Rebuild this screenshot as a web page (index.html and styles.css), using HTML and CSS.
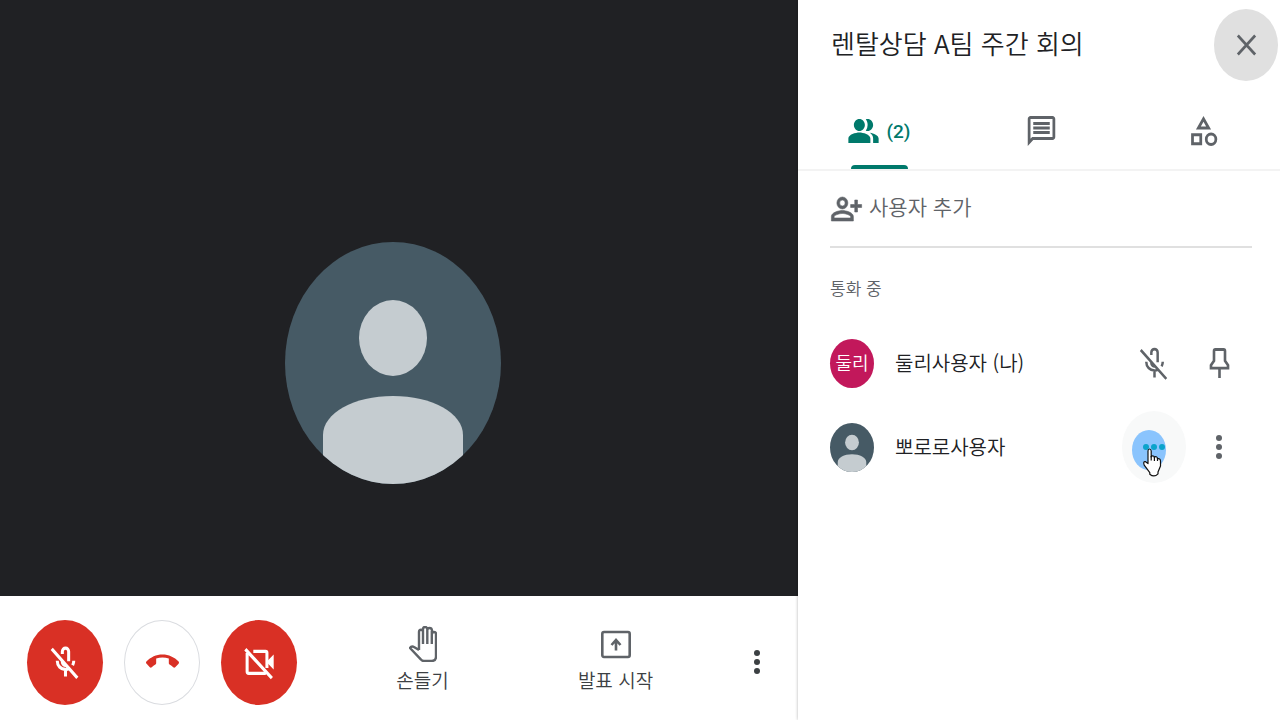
FILE: index.html
```html
<!DOCTYPE html>
<html lang="ko">
<head>
    <meta charset="UTF-8">
    <meta name="viewport" content="width=device-width, initial-scale=1.0">
    <title>렌탈상담 A팀 주간 회의</title>
    <link rel="stylesheet" href="styles.css">
</head>
<body>
    <svg class="symbols" aria-hidden="true">
        <symbol id="person" viewBox="0 0 216 242" preserveAspectRatio="none">
            <clipPath id="person-clip"><ellipse cx="108" cy="121" rx="108" ry="121"/></clipPath>
            <g clip-path="url(#person-clip)">
                <rect width="216" height="242" fill="#465a65"/>
                <ellipse cx="108" cy="96" rx="34" ry="38" fill="#c5ccd0"/>
                <path d="M38 242V193C38 171 69 154 108 154S178 171 178 193V242Z" fill="#c5ccd0"/>
            </g>
        </symbol>
        <symbol id="mic-off" viewBox="0 0 24 24" preserveAspectRatio="none">
            <path d="M2 3.3 20.6 22.6M9.700 6.600V5a2.300 2.300 0 0 1 4.600 0v6.500M9.700 11V12a2.300 2.300 0 0 0 2.900 2.200M6 11.200c0 3.400 2.600 5.800 6 5.800 1 0 2-.3 2.800-.8M12 17v4.600M18 11.200c0 1.100-.3 2.100-.8 3" fill="none" stroke="currentColor"/>
        </symbol>
        <symbol id="dots" viewBox="0 0 6 24" preserveAspectRatio="none">
            <ellipse cx="3" cy="3" rx="3" ry="3"/>
            <ellipse cx="3" cy="12" rx="3" ry="3"/>
            <ellipse cx="3" cy="21" rx="3" ry="3"/>
        </symbol>
    </svg>

    <div class="meeting">
        <main class="call">
            <div class="stage">
                <svg class="stage-avatar"><use href="#person"/></svg>
            </div>
            <div class="toolbar">
                <div class="call-buttons">
                    <button class="round-button red" aria-label="마이크 켜기">
                        <svg class="icon bold"><use href="#mic-off"/></svg>
                    </button>
                    <button class="round-button outline" aria-label="통화에서 나가기">
                        <svg class="icon" viewBox="0 0 24 24" preserveAspectRatio="none"><path d="M12 9c-1.6 0-3.15.25-4.6.72v3.1c0 .39-.23.74-.56.9-.98.49-1.87 1.12-2.66 1.85-.18.18-.43.28-.7.28-.28 0-.53-.11-.71-.29L.29 13.08A.956.956 0 0 1 0 12.37c0-.28.11-.53.29-.71C3.34 8.78 7.46 7 12 7s8.66 1.78 11.71 4.67c.18.18.29.43.29.71 0 .28-.11.53-.29.71l-2.48 2.48c-.18.18-.43.29-.71.29-.27 0-.52-.11-.7-.28a11.27 11.27 0 0 0-2.67-1.85.996.996 0 0 1-.56-.9v-3.1C15.15 9.25 13.6 9 12 9z"/></svg>
                    </button>
                    <button class="round-button red" aria-label="카메라 켜기">
                        <svg class="icon" viewBox="0 0 24 24" preserveAspectRatio="none">
                            <path d="M7.5 4.9h8.9q1 0 1 1V16M3 6v12.4q0 1.2 1.2 1.2h12.4M1.700 3.500 21 22.8" fill="none" stroke="currentColor" stroke-width="2.200"/>
                            <path d="M17 12l5.3-5v10z"/>
                        </svg>
                    </button>
                </div>
                <button class="action">
                    <svg class="hand" viewBox="0 0 28 36"><path d="M10 24V6q0-2.3 2-2.3T14 6V3.3Q14 1 16.1 1t2.2 2.3V4q0-2 2.2-2T23 4.3V8q0-2 2-2t2 2v22.5q0 4.5-4.5 4.5H15q-2 0-3.2-1.6L1 22q1.5-2.4 4.4-.8L10 24M14 5v13M18.3 4v14M22.8 5v13" fill="none" stroke="currentColor" stroke-width="2.400" stroke-linejoin="round"/></svg>
                    <span>손들기</span>
                </button>
                <button class="action">
                    <svg class="present" viewBox="0 0 30 36"><path d="M3 6h24q1.700 0 1.700 2v21q0 2-1.700 2H3q-1.700 0-1.700-2V8q0-2 1.700-2zM15 24.500V15M10.500 19 15 14l4.500 5" fill="none" stroke="currentColor" stroke-width="2.600"/></svg>
                    <span>발표 시작</span>
                </button>
                <button class="toolbar-more" aria-label="옵션 더보기"><svg class="dots"><use href="#dots"/></svg></button>
            </div>
        </main>

        <aside class="panel">
            <header class="panel-header">
                <h1>렌탈상담 A팀 주간 회의</h1>
                <button class="icon-button close" aria-label="닫기">
                    <svg class="icon" viewBox="0 0 24 24" preserveAspectRatio="none"><path d="M5.7 5.7 18.3 18.3M18.3 5.7 5.7 18.3" stroke="currentColor" stroke-width="2"/></svg>
                </button>
            </header>

            <nav class="tabs">
                <button class="tab active" aria-label="사용자">
                    <svg class="icon" viewBox="0 0 24 24" preserveAspectRatio="none"><path d="M15 8c0-1.42-.5-2.73-1.33-3.76.42-.14.86-.24 1.33-.24 2.21 0 4 1.79 4 4s-1.79 4-4 4c-.43 0-.84-.09-1.23-.21-.03-.01-.06-.02-.1-.03A5.98 5.98 0 0 0 15 8zm1.66 5.13C18.03 14.06 19 15.32 19 17v3h4v-3c0-2.18-3.58-3.47-6.34-3.87zM9 4c2.21 0 4 1.79 4 4s-1.79 4-4 4-4-1.79-4-4 1.79-4 4-4zm0 9c2.67 0 8 1.34 8 4v3H1v-3c0-2.66 5.33-4 8-4z"/></svg>
                    <span>(2)</span>
                </button>
                <button class="tab" aria-label="채팅">
                    <svg class="icon" viewBox="0 0 24 24" preserveAspectRatio="none"><path d="M4 4h16v12H5.17L4 17.17V4m0-2c-1.1 0-1.99.9-1.99 2L2 22l4-4h14c1.1 0 2-.9 2-2V4c0-1.1-.9-2-2-2H4zm2 10h12v2H6v-2zm0-3h12v2H6V9zm0-3h12v2H6V6z"/></svg>
                </button>
                <button class="tab" aria-label="활동">
                    <svg class="icon" viewBox="0 0 24 24" preserveAspectRatio="none"><path fill-rule="evenodd" d="M12 2l-5.5 9h11L12 2zm0 3.84L13.93 9h-3.87L12 5.84zM17.5 13a4.5 4.5 0 1 0 0 9 4.5 4.5 0 0 0 0-9zm0 7a2.5 2.5 0 0 1 0-5 2.5 2.5 0 0 1 0 5zM3 21.5h8v-8H3v8zm2-6h4v4H5v-4z"/></svg>
                </button>
            </nav>

            <div class="people">
                <button class="add-person">
                    <svg class="icon" viewBox="0 0 24 24" preserveAspectRatio="none"><path fill-rule="evenodd" d="M18 6h2v3h3v2h-3v3h-2v-3h-3V9h3zM9 4a4 4 0 1 0 0 8 4 4 0 0 0 0-8zm0 2a2 2 0 1 1 0 4 2 2 0 0 1 0-4zM9 13c-2.67 0-8 1.34-8 4v3h16v-3c0-2.66-5.33-4-8-4zm6 5H3v-.99C3.2 16.29 6.3 15 9 15s5.8 1.29 6 2v1z" stroke="currentColor" stroke-width=".4"/></svg>
                    <span>사용자 추가</span>
                </button>
                <h2>통화 중</h2>
                <ul>
                    <li>
                        <span class="avatar initials">둘리</span>
                        <span class="name">둘리사용자 (나)</span>
                        <button class="icon-button" aria-label="음소거됨">
                            <svg class="icon thin"><use href="#mic-off"/></svg>
                        </button>
                        <button class="icon-button" aria-label="화면에 고정">
                            <svg class="icon" viewBox="0 0 24 24" preserveAspectRatio="none"><path d="M9 3h6q1 0 1 1v6.5l2.2 3v1.9H5.8v-1.9L8 10.5V4q0-1 1-1zM12 15.4V22" fill="none" stroke="currentColor" stroke-width="1.9"/></svg>
                        </button>
                    </li>
                    <li>
                        <svg class="avatar"><use href="#person"/></svg>
                        <span class="name">뽀로로사용자</span>
                        <button class="icon-button speaking" aria-label="음소거">
                            <svg class="speaking-icon" viewBox="0 0 64 72">
                                <ellipse cx="27" cy="39" rx="17" ry="20" fill="#8ac4fd"/>
                                <g fill="#0ba3cb">
                                    <ellipse cx="24" cy="36" rx="3" ry="3"/>
                                    <ellipse cx="32" cy="36" rx="3" ry="3"/>
                                    <ellipse cx="40" cy="36" rx="3" ry="3"/>
                                </g>
                                <path d="M26 40q0-2 1.5-2t1.7 2v6q.3-1.4 1.7-1.2t1.5 1.7q.6-1.2 1.9-.7t1.2 1.9q2.8-.6 3 2.3v5l-2.5 6v1.8q-3.7 4-8.2.4v-1.6l-5.6-7.5q-1.300-3.700 1-3.500l2.800 2z" fill="#fff" stroke="#111" stroke-width="1.2" stroke-linejoin="round"/>
                                <path d="M29.2 45v4.5M32.4 46v4M35.5 47v3" stroke="#111" stroke-width="1.2"/>
                            </svg>
                        </button>
                        <button class="icon-button" aria-label="추가 작업"><svg class="dots"><use href="#dots"/></svg></button>
                    </li>
                </ul>
            </div>
        </aside>
    </div>
</body>
</html>
```
FILE: styles.css
```css
* {
    box-sizing: border-box;
}
body {
    margin: 0;
    font-family: "Noto Sans CJK KR", sans-serif;
    font-weight: 350;
    color: #202124;
    background-color: #fff;
}
h1,
h2,
ul {
    margin: 0;
    padding: 0;
    font-weight: 350;
    list-style: none;
}
button {
    display: flex;
    align-items: center;
    justify-content: center;
    padding: 0;
    border: none;
    background: none;
    color: #5f6368;
    font: inherit;
    cursor: pointer;
}
svg {
    display: block;
    flex-shrink: 0;
    fill: currentColor;
}
.symbols {
    position: absolute;
    width: 0;
    height: 0;
}
.icon {
    width: 33px;
    height: 36px;
}
.bold {
    stroke-width: 2.2;
}
.thin {
    stroke-width: 1.8;
}
.dots {
    width: 6px;
    height: 24px;
}

.meeting {
    display: flex;
    min-height: 100vh;
    overflow: hidden;
}

/* call area */
.call {
    display: flex;
    flex: 1;
    flex-direction: column;
}
.stage {
    display: flex;
    flex: 1;
    align-items: center;
    justify-content: center;
    padding: 130px 12px 0 0;
    background-color: #202124;
}
.stage-avatar {
    width: 216px;
    height: 242px;
}
.toolbar {
    display: flex;
    align-items: center;
    height: 124px;
    padding-left: 27px;
}
.call-buttons {
    display: flex;
    gap: 21px;
    padding-top: 8px;
    margin-right: 29px;
}
.round-button {
    width: 76px;
    height: 85px;
    border-radius: 50%;
}
.red {
    background-color: #d93025;
    color: #fff;
}
.outline {
    border: 1px solid #dadce0;
    color: #d93025;
}
.action {
    flex: 1;
    flex-direction: column;
    gap: 6px;
    padding-top: 2px;
    font-size: 19px;
    line-height: 24px;
}
.action span {
    color: #3c4043;
}
.hand {
    width: 28px;
    height: 36px;
}
.present {
    width: 30px;
    height: 36px;
}
.toolbar-more {
    width: 86px;
    height: 72px;
    padding: 8px 0 0 4px;
    color: #3c4043;
}

/* side panel */
.panel {
    position: relative;
    width: 482px;
    background-color: #fff;
    box-shadow: 0 0 3px rgba(0, 0, 0, 0.3);
}
.panel-header {
    display: flex;
    align-items: center;
    justify-content: space-between;
    padding: 9px 2px 15px 33px;
}
.panel-header h1 {
    padding-bottom: 4px;
    font-size: 26px;
    line-height: 36px;
}
.icon-button {
    width: 64px;
    height: 72px;
    border-radius: 50%;
}
.close {
    background-color: #e0e0e0;
}
.tabs {
    display: grid;
    grid-template-columns: repeat(3, 162px);
    border-bottom: 2px solid #f3f3f3;
}
.tab {
    position: relative;
    height: 73px;
    padding-bottom: 3px;
    gap: 6px;
    font-family: Roboto, sans-serif;
    font-size: 19px;
    font-weight: 500;
}
.active {
    color: #00796b;
}
.active::after {
    content: "";
    position: absolute;
    bottom: 0;
    width: 57px;
    height: 4px;
    border-radius: 4px 4px 0 0;
    background-color: #00796b;
}
.people {
    padding: 0 28px 0 32px;
}
.add-person {
    justify-content: flex-start;
    gap: 6px;
    width: 100%;
    height: 77px;
    border-bottom: 2px solid #e0e0e0;
    font-size: 21px;
}
.add-person span {
    padding-bottom: 5px;
}
.people h2 {
    padding: 29px 0 22px;
    color: #5f6368;
    font-size: 17px;
    line-height: 22px;
}
.people li {
    display: flex;
    align-items: center;
    gap: 1px;
    height: 84px;
    padding-right: 1px;
}
.avatar {
    width: 44px;
    height: 49px;
}
.initials {
    display: flex;
    align-items: center;
    justify-content: center;
    padding-bottom: 2px;
    border-radius: 50%;
    background-color: #c2185b;
    color: #fff;
    font-size: 18px;
}
.name {
    flex: 1;
    padding: 0 0 2px 20px;
    font-size: 20px;
}
.speaking {
    background-color: #f8f9f9;
}
.speaking-icon {
    width: 64px;
    height: 72px;
}
```
